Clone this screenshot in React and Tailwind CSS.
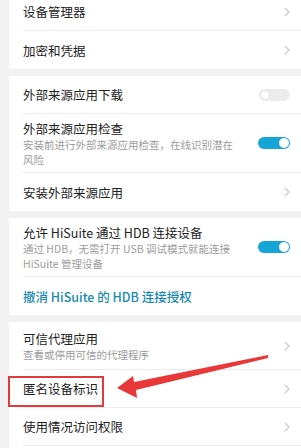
import React from 'react';

const font = { fontFamily: '"Noto Sans CJK SC", "Noto Sans", sans-serif' };

const Chevron = () => (
  <svg width="6" height="10" viewBox="0 0 6 10" fill="none" className="shrink-0">
    <path d="M0.8 0.8 L5 5 L0.8 9.2" stroke="#c4c4c4" strokeWidth="1.1" />
  </svg>
);

const Toggle = ({ on }) =>
  on ? (
    <div className="w-[32px] h-[12px] rounded-full bg-[#17a5d8] flex items-center justify-end pr-[1px] shrink-0">
      <div className="w-[10px] h-[10px] rounded-full bg-white" />
    </div>
  ) : (
    <div className="w-[31px] h-[12px] rounded-full bg-[#ececec] flex items-center pl-[1px] shrink-0">
      <div className="w-[10px] h-[10px] rounded-full bg-white border border-[#e2e2e2]" />
    </div>
  );

const Row = ({ title, sub, right, last, h = 'h-[38px]', blue }) => (
  <div className={`${h} flex items-center justify-between pr-[11px] ${last ? '' : 'border-b border-[#ececec]'}`}>
    <div className="flex flex-col">
      <span className={`text-[12.5px] leading-[17px] ${blue ? 'text-[#1a8ab2] font-medium' : 'text-[#222]'}`}>{title}</span>
      {sub && <span className="text-[10.5px] leading-[15px] text-[#9c9c9c] max-w-[215px]">{sub}</span>}
    </div>
    {right}
  </div>
);

const Card = ({ children, className = '' }) => (
  <div className={`bg-white ml-[9px] pl-[14px] ${className}`}>{children}</div>
);

export default function App() {
  return (
    <div className="relative w-[301px] h-[448px] overflow-hidden bg-[#f2f2f2]" style={font}>
      <div className="flex flex-col gap-[7px] -mt-[7px]">
        <Card>
          <Row title="设备管理器" right={<Chevron />} />
          <Row title="加密和凭据" right={<Chevron />} last />
        </Card>
        <Card>
          <Row title="外部来源应用下载" right={<Toggle />} />
          <Row
            h="h-[59px]"
            title="外部来源应用检查"
            sub="安装前进行外部来源应用检查，在线识别潜在风险"
            right={<Toggle on />}
          />
          <Row title="安装外部来源应用" right={<Chevron />} last />
        </Card>
        <Card>
          <Row
            h="h-[59px]"
            title="允许 HiSuite 通过 HDB 连接设备"
            sub="通过 HDB，无需打开 USB 调试模式就能连接 HiSuite 管理设备"
            right={<Toggle on />}
          />
          <Row title="撤消 HiSuite 的 HDB 连接授权" blue last />
        </Card>
        <Card>
          <Row h="h-[48px]" title="可信代理应用" sub="查看或停用可信的代理程序" right={<Chevron />} />
          <Row title="匿名设备标识" right={<Chevron />} />
          <Row title="使用情况访问权限" right={<Chevron />} />
          <Row title="" />
        </Card>
      </div>

      {/* annotation */}
      <div className="absolute left-[8px] top-[376px] w-[96px] h-[31px] border-[2.5px] border-[#e23a3a]" />
      <svg className="absolute inset-0 pointer-events-none" width="301" height="448" viewBox="0 0 301 448">
        <polygon
          points="117,388 133,376 134,382 268,355 268,358 136,390 137,398"
          fill="#e8383a"
        />
      </svg>
    </div>
  );
}
